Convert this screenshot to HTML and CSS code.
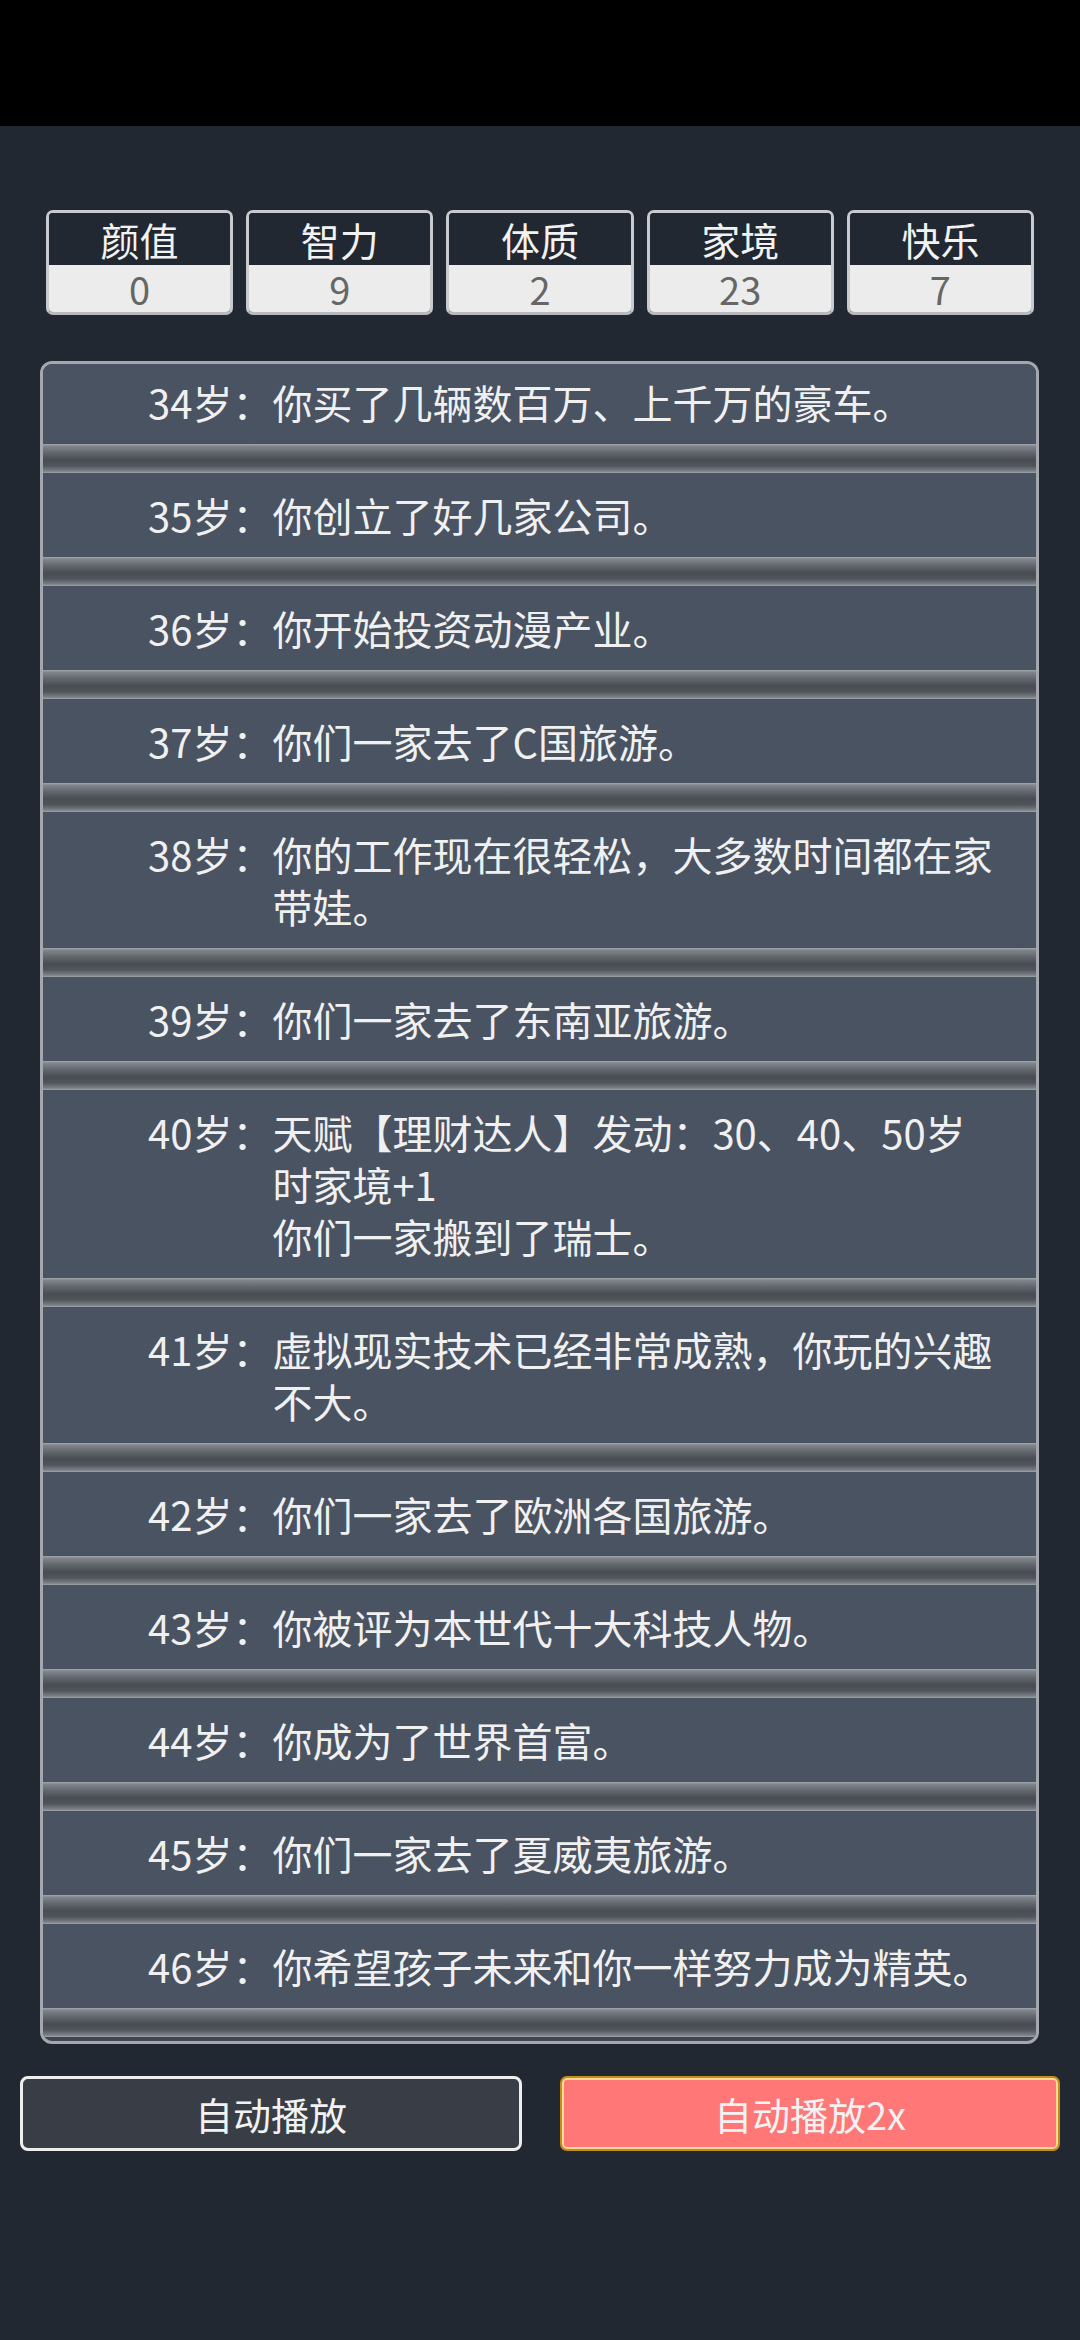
FILE: index.html
```html
<!DOCTYPE html>
<html lang="zh-CN">
<head>
<meta charset="utf-8">
<title>人生重开模拟器</title>
<link rel="stylesheet" href="styles.css">
</head>
<body>
<div class="statusbar"></div>
<main class="screen">
  <section class="stats">
    <div class="stat"><div class="stat-label">颜值</div><div class="stat-value">0</div></div>
    <div class="stat"><div class="stat-label">智力</div><div class="stat-value">9</div></div>
    <div class="stat"><div class="stat-label">体质</div><div class="stat-value">2</div></div>
    <div class="stat"><div class="stat-label">家境</div><div class="stat-value">23</div></div>
    <div class="stat"><div class="stat-label">快乐</div><div class="stat-value">7</div></div>
  </section>
  <section class="panel">
    <ul class="trajectory">
      <li class="event"><span class="age">34岁：</span><span class="desc">你买了几辆数百万、上千万的豪车。</span></li>
      <li class="event"><span class="age">35岁：</span><span class="desc">你创立了好几家公司。</span></li>
      <li class="event"><span class="age">36岁：</span><span class="desc">你开始投资动漫产业。</span></li>
      <li class="event"><span class="age">37岁：</span><span class="desc">你们一家去了C国旅游。</span></li>
      <li class="event"><span class="age">38岁：</span><span class="desc">你的工作现在很轻松，大多数时间都在家带娃。</span></li>
      <li class="event"><span class="age">39岁：</span><span class="desc">你们一家去了东南亚旅游。</span></li>
      <li class="event"><span class="age">40岁：</span><span class="desc">天赋【理财达人】发动：30、40、50岁时家境+1<br>你们一家搬到了瑞士。</span></li>
      <li class="event"><span class="age">41岁：</span><span class="desc">虚拟现实技术已经非常成熟，你玩的兴趣不大。</span></li>
      <li class="event"><span class="age">42岁：</span><span class="desc">你们一家去了欧洲各国旅游。</span></li>
      <li class="event"><span class="age">43岁：</span><span class="desc">你被评为本世代十大科技人物。</span></li>
      <li class="event"><span class="age">44岁：</span><span class="desc">你成为了世界首富。</span></li>
      <li class="event"><span class="age">45岁：</span><span class="desc">你们一家去了夏威夷旅游。</span></li>
      <li class="event"><span class="age">46岁：</span><span class="desc">你希望孩子未来和你一样努力成为精英。</span></li>
    </ul>
  </section>
  <section class="actions">
    <button class="btn btn-auto">自动播放</button>
    <button class="btn btn-fast">自动播放2x</button>
  </section>
</main>
</body>
</html>
```

FILE: styles.css
```css
* {
  box-sizing: border-box;
}

html, body {
  margin: 0;
  padding: 0;
  background: #222831;
}

body {
  width: 1080px;
  height: 2340px;
  overflow: hidden;
  font-family: "Noto Sans CJK SC", "Noto Sans", sans-serif;
  color: #eeeeee;
}

.statusbar {
  height: 126px;
  background: #000000;
}

.screen {
  display: flex;
  flex-direction: column;
  padding-top: 84px;
}

/* ---------- stats ---------- */
.stats {
  display: flex;
  gap: 13px;
  padding: 0 46px;
}

.stat {
  flex: 1;
  height: 105px;
  display: flex;
  flex-direction: column;
  border: 3px solid #c9cacd;
  border-bottom-color: #b9babe;
  border-radius: 7px;
  overflow: hidden;
}

.stat-label {
  height: 52px;
  background: #222831;
  color: #f2f2f2;
  font-size: 39px;
  line-height: 52px;
  text-align: center;
}

.stat-value {
  flex: 1;
  background: #ececec;
  color: #666666;
  font-size: 38px;
  line-height: 47px;
  text-align: center;
}

/* ---------- trajectory panel ---------- */
.panel {
  margin: 46px 41px 0 40px;
  height: 1683px;
  border: 3px solid #a4a8ae;
  border-radius: 12px;
  overflow: hidden;
  background: #41454c;
}

.trajectory {
  list-style: none;
  margin: -4px 0 0 0;
  padding: 0;
}

.event {
  display: flex;
  padding: 16px 40px 16px 105px;
  font-size: 40px;
  line-height: 52px;
  color: #f0f0f0;
  border-bottom: 29px solid transparent;
  background:
    linear-gradient(#4a5361, #4a5361) padding-box,
    linear-gradient(to bottom,
      #a2a6ac 0%,
      #80848b 8%,
      #62666d 30%,
      #494c53 55%,
      #50545b 75%,
      #7a7e85 93%,
      #a0a4aa 100%) left bottom / 100% 29px no-repeat border-box;
}

.age {
  flex: 0 0 auto;
  white-space: nowrap;
}

.desc {
  flex: 1;
  min-width: 0;
}

/* ---------- buttons ---------- */
.actions {
  display: flex;
  gap: 38px;
  padding: 0 20px;
  margin-top: 32px;
}

.btn {
  flex: 1;
  height: 75px;
  font-family: "Noto Sans CJK SC", "Noto Sans", sans-serif;
  font-size: 38px;
  color: #f2f2f2;
  padding: 0;
  cursor: pointer;
}

.btn-auto {
  background: #393e46;
  border: 3px solid #eeeeee;
  border-radius: 8px;
}

.btn-fast {
  background: #ff7777;
  border: 2px solid #c38d1c;
  border-radius: 7px;
  box-shadow: inset 0 0 0 2px #f9dc92;
}
```
